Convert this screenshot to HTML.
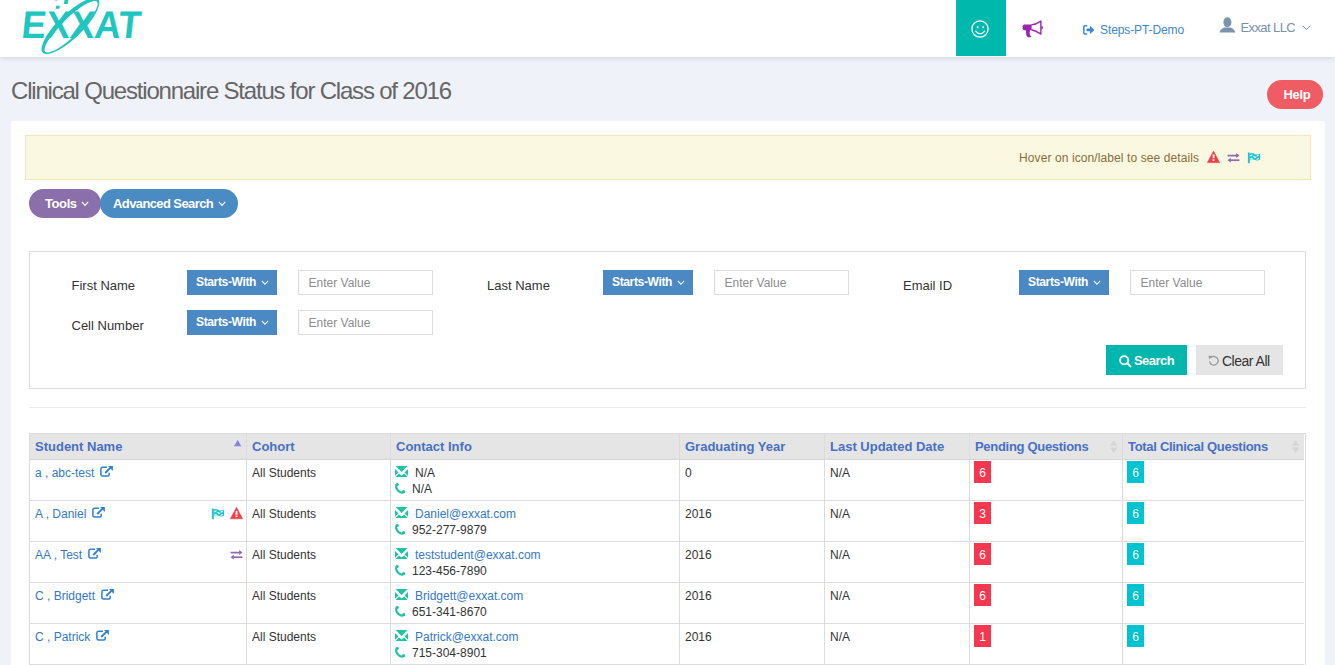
<!DOCTYPE html>
<html><head><meta charset="utf-8">
<style>
*{box-sizing:border-box;margin:0;padding:0}
html,body{width:1335px;height:665px;overflow:hidden}
body{background:#eff2f9;font-family:"Liberation Sans",sans-serif;position:relative;color:#333}
.a{position:absolute}
.t{position:absolute;white-space:nowrap;line-height:1}
svg{position:absolute;overflow:visible}
#hdr{left:0;top:0;width:1335px;height:57px;background:#fff;box-shadow:0 1px 6px rgba(0,0,0,.13)}
.btnp{position:absolute;border-radius:15px;color:#fff;font-weight:bold}
.sw{position:absolute;width:90px;height:25px;background:#4a89c4}
.sw .t{left:9px;top:6px;font-size:12px;font-weight:bold;color:#fff;letter-spacing:-0.35px}
.sw svg{left:74px;top:10px}
.inp{position:absolute;width:135px;height:25px;border:1px solid #dcdcdc;background:#fff}
.inp .t{left:9.5px;top:6px;font-size:12px;color:#8c8c8c}
.lbl{font-size:13px;color:#333}
.th{font-size:13px;font-weight:bold;color:#4870c6}
.td{font-size:12px;color:#333}
.lnk{font-size:12px;color:#3479c4}
.vb{position:absolute;top:433px;width:1px;height:232px;background:#dcdcdc}
.hb{position:absolute;left:29px;width:1277px;height:1px;background:#dcdcdc}
.bdg{position:absolute;width:17px;height:22px;color:#fff;font-size:12px;text-align:center;line-height:22px;padding-top:1px}
.red{background:#f5374f}
.cyan{background:#00c3d2}
.ic{position:absolute}
</style></head><body>

<!-- header -->
<div id="hdr" class="a"></div>
<!-- logo -->
<svg width="150" height="57" viewBox="0 0 150 57" style="left:0;top:0">
  <g fill="#1fc6bf">
    <text x="20" y="38.4" font-family="Liberation Sans" font-weight="bold" font-size="38.5" textLength="119" lengthAdjust="spacingAndGlyphs" transform="skewX(-6) translate(4.5,0)">EXXAT</text>
    <g transform="translate(70.4,26) rotate(-44)">
      <path fill-rule="evenodd" d="M-38.5,0 A38.5,12 0 1 0 38.5,0 A38.5,12 0 1 0 -38.5,0 Z M-36,1 A36,8.8 0 1 0 36,1 A36,8.8 0 1 0 -36,1 Z"/>
    </g>
    <rect x="57" y="5.8" width="3.6" height="3" transform="skewX(-8)"/>
    <rect x="64.5" y="0" width="3.8" height="4" transform="skewX(-8)"/>
    <rect x="55" y="-1" width="2.5" height="1.5"/>
  </g>
</svg>
<div class="a" style="left:956px;top:0;width:50px;height:56px;background:#00b9ad"></div>
<svg width="20" height="20" viewBox="0 0 20 20" style="left:970.3px;top:18.6px">
  <circle cx="10" cy="10" r="8.1" fill="none" stroke="#fff" stroke-width="1.25"/>
  <circle cx="7.6" cy="8.3" r="1" fill="#fff"/>
  <circle cx="13.2" cy="8.3" r="1" fill="#fff"/>
  <path d="M5.4,11.9 Q10.2,17.6 15,11.9" fill="none" stroke="#fff" stroke-width="1.2"/>
</svg>
<svg width="22" height="18" viewBox="0 0 22 18" style="left:1021.5px;top:19.5px">
  <path d="M2.4,4.45 H9.6 V10.2 H2.4 Q0.6,10.2 0.6,8.4 V6.25 Q0.6,4.45 2.4,4.45 Z" fill="#9b27b0"/>
  <path d="M9.3,4.9 Q13.8,4.6 18.9,1.1 V14.1 Q13.8,10.6 9.3,9.8" fill="none" stroke="#9b27b0" stroke-width="1.4" stroke-linejoin="round"/>
  <rect x="19.3" y="6.3" width="1.5" height="2.6" fill="#9b27b0"/>
  <path d="M3.8,10 H8.1 L7.6,13.4 Q7.7,15.5 9.6,16.7 Q8.6,17.4 6.2,17.3 Q4.5,16.8 4.2,14.4 Z" fill="#9b27b0"/>
</svg>
<svg width="12" height="10" viewBox="0 0 12 10" style="left:1082.5px;top:24.5px">
  <path d="M4.2,0.8 H2 Q0.8,0.8 0.8,2 V7.8 Q0.8,9 2,9 H4.2" fill="none" stroke="#3a87d4" stroke-width="1.5"/>
  <path d="M3.6,3.6 H7 V0.8 L11.4,4.9 L7,9 V6.2 H3.6 Z" fill="#3a87d4"/>
</svg>
<div class="t" style="left:1100px;top:24px;font-size:12px;color:#3a87d4;letter-spacing:-0.1px">Steps-PT-Demo</div>
<svg width="17" height="16" viewBox="0 0 17 16" style="left:1218.5px;top:16.6px">
  <ellipse cx="8.4" cy="5.3" rx="4" ry="5" fill="#7b93ad"/>
  <path d="M0.4,15.6 Q1,12.4 5.2,10.6 H11.6 Q15.8,12.4 16.4,15.6 Z" fill="#7b93ad"/>
</svg>
<div class="t" style="left:1240.5px;top:21px;font-size:13px;color:#7990ab;letter-spacing:-0.6px">Exxat LLC</div>
<svg width="9" height="6" viewBox="0 0 9 6" style="left:1302px;top:25px">
  <path d="M0.8,0.8 L4.5,4.6 L8.2,0.8" fill="none" stroke="#7b93ad" stroke-width="1"/>
</svg>


<!-- content panel -->
<div class="t" style="left:11px;top:79px;font-size:24px;color:#666;letter-spacing:-1.2px">Clinical Questionnaire Status for Class of 2016</div>
<div class="btnp" style="left:1267px;top:80px;width:56px;height:29px;background:#ef5c63"><div class="t" style="left:16.5px;top:8px;font-size:13px;letter-spacing:-0.3px">Help</div></div>

<div class="a" style="left:11px;top:121px;width:1314px;height:560px;background:#fff"></div>

<div class="a" style="left:25px;top:135px;width:1286px;height:45px;background:#faf8e1;border:1px solid #f7e5bf"></div>
<div class="t" style="left:1019px;top:152px;font-size:12px;color:#8a6d3b;letter-spacing:0.1px">Hover on icon/label to see details</div>

<div class="btnp" style="left:29px;top:189px;width:72px;height:29px;background:#8b6fab"><div class="t" style="left:16px;top:8px;font-size:13px;letter-spacing:-0.4px">Tools</div></div>
<div class="btnp" style="left:100px;top:189px;width:138px;height:29px;background:#4a8bc3"><div class="t" style="left:13px;top:8px;font-size:13px;letter-spacing:-0.6px">Advanced Search</div></div>

<!-- search panel -->
<div class="a" style="left:29px;top:251px;width:1277px;height:138px;border:1px solid #dedede"></div>
<div class="t lbl" style="left:71.5px;top:279px">First Name</div>
<div class="t lbl" style="left:487px;top:279px">Last Name</div>
<div class="t lbl" style="left:903px;top:279px">Email ID</div>
<div class="t lbl" style="left:71.5px;top:319px">Cell Number</div>

<div class="sw" style="left:187px;top:270px"><div class="t">Starts-With</div><svg width="8" height="6" viewBox="0 0 8 6"><path d="M0.8,0.8 L4,4.2 L7.2,0.8" fill="none" stroke="#fff" stroke-width="1.1"/></svg></div>
<div class="sw" style="left:603px;top:270px"><div class="t">Starts-With</div><svg width="8" height="6" viewBox="0 0 8 6"><path d="M0.8,0.8 L4,4.2 L7.2,0.8" fill="none" stroke="#fff" stroke-width="1.1"/></svg></div>
<div class="sw" style="left:1019px;top:270px"><div class="t">Starts-With</div><svg width="8" height="6" viewBox="0 0 8 6"><path d="M0.8,0.8 L4,4.2 L7.2,0.8" fill="none" stroke="#fff" stroke-width="1.1"/></svg></div>
<div class="sw" style="left:187px;top:310px"><div class="t">Starts-With</div><svg width="8" height="6" viewBox="0 0 8 6"><path d="M0.8,0.8 L4,4.2 L7.2,0.8" fill="none" stroke="#fff" stroke-width="1.1"/></svg></div>

<div class="inp" style="left:298px;top:270px"><div class="t">Enter Value</div></div>
<div class="inp" style="left:714px;top:270px"><div class="t">Enter Value</div></div>
<div class="inp" style="left:1130px;top:270px"><div class="t">Enter Value</div></div>
<div class="inp" style="left:298px;top:310px"><div class="t">Enter Value</div></div>

<div class="a" style="left:1106px;top:345px;width:81px;height:30px;background:#00b6ad"><div class="t" style="left:28px;top:9px;font-size:13px;font-weight:bold;color:#fff;letter-spacing:-0.55px">Search</div></div>
<div class="a" style="left:1196px;top:345px;width:87px;height:30px;background:#e5e5e5"><div class="t" style="left:26px;top:9px;font-size:14px;color:#333;letter-spacing:-0.5px">Clear All</div></div>

<div class="a" style="left:29px;top:407px;width:1277px;height:1px;background:#ececec"></div>

<!-- table -->
<div class="a" style="left:30px;top:434px;width:1274px;height:25px;background:#e5e5e5"></div>
<div class="hb" style="top:433px"></div>
<div class="hb" style="width:1275px;top:459px;background:#d5d5d5"></div>
<div class="hb" style="width:1275px;top:500px"></div>
<div class="hb" style="width:1275px;top:541px"></div>
<div class="hb" style="width:1275px;top:582px"></div>
<div class="hb" style="width:1275px;top:623px"></div>
<div class="hb" style="width:1275px;top:664px"></div>
<div class="vb" style="left:29px"></div>
<div class="vb" style="left:246px"></div>
<div class="vb" style="left:390px"></div>
<div class="vb" style="left:679px"></div>
<div class="vb" style="left:824px"></div>
<div class="vb" style="left:969px"></div>
<div class="vb" style="left:1122px"></div>
<div class="vb" style="left:1305px"></div>

<div class="t th" style="left:35px;top:440px">Student Name</div>
<div class="t th" style="left:252px;top:440px">Cohort</div>
<div class="t th" style="left:396px;top:440px">Contact Info</div>
<div class="t th" style="left:685px;top:440px">Graduating Year</div>
<div class="t th" style="left:830px;top:440px">Last Updated Date</div>
<div class="t th" style="left:975px;top:440px;letter-spacing:-0.3px">Pending Questions</div>
<div class="t th" style="left:1128px;top:440px;letter-spacing:-0.3px">Total Clinical Questions</div>

<!-- alert icons -->
<svg width="13" height="13" viewBox="0 0 13 13" style="left:1207px;top:150px"><path d="M6.5,1.1 L12.6,12.6 H0.4 Z" fill="#ef3f47" stroke="#ef3f47" stroke-width="0.6" stroke-linejoin="round"/><rect x="5.6" y="4.4" width="1.9" height="3.8" fill="#fff"/><rect x="5.6" y="9.2" width="1.9" height="1.6" fill="#fff"/></svg>
<svg width="13" height="10" viewBox="0 0 13 10" style="left:1227px;top:152.5px"><path d="M0.6,2.6 H10.5" stroke="#8c6ab2" stroke-width="1.7"/><path d="M9.2,0 L12.5,2.6 L9.2,5 Z" fill="#8c6ab2"/><path d="M2.5,7.2 H12.4" stroke="#8c6ab2" stroke-width="1.7"/><path d="M3.8,4.8 L0.5,7.2 L3.8,9.6 Z" fill="#8c6ab2"/></svg>
<svg width="14" height="12" viewBox="0 0 14 12" style="left:1247px;top:151.5px"><rect x="0.9" y="0.5" width="1.9" height="10.7" fill="#1fc2d3"/><path d="M2.8,1.4 Q5,0.6 7.6,2 Q10.4,3.2 13.1,1.6 V7.6 Q10.4,9.2 7.6,7.8 Q5,6.6 2.8,8.4 Z" fill="#1fc2d3"/><g fill="#fff" opacity="0.9"><ellipse cx="4.3" cy="3.3" rx="1.5" ry="0.7" transform="rotate(-25 4.3 3.3)"/><ellipse cx="10.7" cy="3.7" rx="1.5" ry="0.7" transform="rotate(-25 10.7 3.7)"/><ellipse cx="7.6" cy="5" rx="1.5" ry="0.7" transform="rotate(20 7.6 5)"/><ellipse cx="4.3" cy="6.6" rx="1.5" ry="0.7" transform="rotate(-25 4.3 6.6)"/><ellipse cx="10.7" cy="6.9" rx="1.5" ry="0.7" transform="rotate(-25 10.7 6.9)"/></g></svg>
<!-- button chevrons -->
<svg width="8" height="6" viewBox="0 0 8 6" style="left:80.5px;top:201px"><path d="M0.8,0.8 L4,4.4 L7.2,0.8" fill="none" stroke="#fff" stroke-width="1.1"/></svg>
<svg width="8" height="6" viewBox="0 0 8 6" style="left:217.5px;top:201px"><path d="M0.8,0.8 L4,4.4 L7.2,0.8" fill="none" stroke="#fff" stroke-width="1.1"/></svg>
<!-- search icon -->
<svg width="13" height="13" viewBox="0 0 13 13" style="left:1118.5px;top:354.5px"><circle cx="5.2" cy="5.2" r="4.1" fill="none" stroke="#fff" stroke-width="1.8"/><path d="M8.2,8.2 L11.4,11.4" stroke="#fff" stroke-width="2" stroke-linecap="round"/></svg>
<!-- refresh icon -->
<svg width="12" height="12" viewBox="0 0 12 12" style="left:1207.5px;top:355px"><path d="M3.2,2.4 A4.3,4.3 0 1 1 1.6,6.4" fill="none" stroke="#999" stroke-width="1.3"/><path d="M0.6,0.8 L4.6,1 L1.2,4.4 Z" fill="#999"/></svg>
<!-- sort arrows -->
<svg width="8" height="7" viewBox="0 0 8 7" style="left:234px;top:440px"><path d="M3.7,0 L7.4,6.2 H0 Z" fill="#8a80dd"/></svg>
<svg width="8" height="14" viewBox="0 0 8 14" style="left:1109.5px;top:439.5px"><path d="M3.7,0 L7.4,5.8 H0 Z M0,7.4 H7.4 L3.7,13.2 Z" fill="#d6d6d6"/></svg>
<svg width="8" height="14" viewBox="0 0 8 14" style="left:1291.8px;top:439.5px"><path d="M3.7,0 L7.4,5.8 H0 Z M0,7.4 H7.4 L3.7,13.2 Z" fill="#d6d6d6"/></svg>

<!-- rows -->
<div class="t lnk" style="left:35px;top:467px">a , abc-test<svg width="13" height="11" viewBox="0 0 13 11" style="position:relative;display:inline-block;vertical-align:top;margin-left:6px;top:-1px"><path d="M7,1.2 H2.6 Q0.9,1.2 0.9,2.9 V8.6 Q0.9,10.1 2.6,10.1 H7.9 Q9.2,10.1 9.2,8.6 V6.8" fill="none" stroke="#2f80cf" stroke-width="1.5"/><path d="M5.2,7 L10.4,1.8" stroke="#2f80cf" stroke-width="1.9"/><path d="M8,0 H12.9 V4.9 Z" fill="#2f80cf"/></svg></div>
<div class="t td" style="left:252px;top:467px">All Students</div>
<svg class="ic" width="13" height="11" viewBox="0 0 13 11" style="left:395px;top:466px"><path d="M0.6,0 H12.5 L6.6,5.9 Z M0,2.9 L3.6,6.5 L0,9.8 Z M13,2.9 L9.5,6.5 L13,9.8 Z M0.6,11 L3.9,7.5 L6.6,9.4 L9.2,7.5 L12.5,11 Z" fill="#1fc39f"/></svg>
<div class="t td" style="left:415px;top:467px">N/A</div>
<svg class="ic" width="11" height="11" viewBox="0 0 11 11" style="left:395px;top:483px"><path d="M2.3,1.2 C0.2,2.4 1,6 3.6,8.2 C5.6,9.8 7.6,10 8.8,8.9" fill="none" stroke="#1fc39f" stroke-width="2.2" stroke-linecap="round"/><circle cx="2.2" cy="1.6" r="1.5" fill="#1fc39f"/><circle cx="8.6" cy="8.6" r="1.5" fill="#1fc39f"/></svg>
<div class="t td" style="left:412px;top:483px">N/A</div>
<div class="t td" style="left:685px;top:467px">0</div>
<div class="t td" style="left:830px;top:467px">N/A</div>
<div class="bdg red" style="left:974px;top:461px">6</div>
<div class="bdg cyan" style="left:1127px;top:461px">6</div>
<div class="t lnk" style="left:35px;top:508px">A , Daniel<svg width="13" height="11" viewBox="0 0 13 11" style="position:relative;display:inline-block;vertical-align:top;margin-left:6px;top:-1px"><path d="M7,1.2 H2.6 Q0.9,1.2 0.9,2.9 V8.6 Q0.9,10.1 2.6,10.1 H7.9 Q9.2,10.1 9.2,8.6 V6.8" fill="none" stroke="#2f80cf" stroke-width="1.5"/><path d="M5.2,7 L10.4,1.8" stroke="#2f80cf" stroke-width="1.9"/><path d="M8,0 H12.9 V4.9 Z" fill="#2f80cf"/></svg></div>
<svg class="ic" width="14" height="12" viewBox="0 0 14 12" style="left:211px;top:508px"><rect x="0.9" y="0.5" width="1.9" height="10.7" fill="#1fc2d3"/><path d="M2.8,1.4 Q5,0.6 7.6,2 Q10.4,3.2 13.1,1.6 V7.6 Q10.4,9.2 7.6,7.8 Q5,6.6 2.8,8.4 Z" fill="#1fc2d3"/><g fill="#fff" opacity="0.9"><ellipse cx="4.3" cy="3.3" rx="1.5" ry="0.7" transform="rotate(-25 4.3 3.3)"/><ellipse cx="10.7" cy="3.7" rx="1.5" ry="0.7" transform="rotate(-25 10.7 3.7)"/><ellipse cx="7.6" cy="5" rx="1.5" ry="0.7" transform="rotate(20 7.6 5)"/><ellipse cx="4.3" cy="6.6" rx="1.5" ry="0.7" transform="rotate(-25 4.3 6.6)"/><ellipse cx="10.7" cy="6.9" rx="1.5" ry="0.7" transform="rotate(-25 10.7 6.9)"/></g></svg>
<svg class="ic" width="13" height="12" viewBox="0 0 13 12" style="left:230px;top:507px"><path d="M6.5,0.3 L12.6,11.8 H0.3 Z" fill="#ef3f47" stroke="#ef3f47" stroke-width="0.6" stroke-linejoin="round"/><rect x="5.6" y="4.1" width="1.9" height="3.6" fill="#fff"/><rect x="5.6" y="8.6" width="1.9" height="1.5" fill="#fff"/></svg>
<div class="t td" style="left:252px;top:508px">All Students</div>
<svg class="ic" width="13" height="11" viewBox="0 0 13 11" style="left:395px;top:507px"><path d="M0.6,0 H12.5 L6.6,5.9 Z M0,2.9 L3.6,6.5 L0,9.8 Z M13,2.9 L9.5,6.5 L13,9.8 Z M0.6,11 L3.9,7.5 L6.6,9.4 L9.2,7.5 L12.5,11 Z" fill="#1fc39f"/></svg>
<div class="t lnk" style="left:415px;top:508px">Daniel@exxat.com</div>
<svg class="ic" width="11" height="11" viewBox="0 0 11 11" style="left:395px;top:524px"><path d="M2.3,1.2 C0.2,2.4 1,6 3.6,8.2 C5.6,9.8 7.6,10 8.8,8.9" fill="none" stroke="#1fc39f" stroke-width="2.2" stroke-linecap="round"/><circle cx="2.2" cy="1.6" r="1.5" fill="#1fc39f"/><circle cx="8.6" cy="8.6" r="1.5" fill="#1fc39f"/></svg>
<div class="t td" style="left:412px;top:524px">952-277-9879</div>
<div class="t td" style="left:685px;top:508px">2016</div>
<div class="t td" style="left:830px;top:508px">N/A</div>
<div class="bdg red" style="left:974px;top:502px">3</div>
<div class="bdg cyan" style="left:1127px;top:502px">6</div>
<div class="t lnk" style="left:35px;top:549px">AA , Test<svg width="13" height="11" viewBox="0 0 13 11" style="position:relative;display:inline-block;vertical-align:top;margin-left:6px;top:-1px"><path d="M7,1.2 H2.6 Q0.9,1.2 0.9,2.9 V8.6 Q0.9,10.1 2.6,10.1 H7.9 Q9.2,10.1 9.2,8.6 V6.8" fill="none" stroke="#2f80cf" stroke-width="1.5"/><path d="M5.2,7 L10.4,1.8" stroke="#2f80cf" stroke-width="1.9"/><path d="M8,0 H12.9 V4.9 Z" fill="#2f80cf"/></svg></div>
<svg class="ic" width="13" height="10" viewBox="0 0 13 10" style="left:230px;top:550px"><path d="M0.6,2.6 H10.5" stroke="#8c6ab2" stroke-width="1.7"/><path d="M9.2,0 L12.5,2.6 L9.2,5 Z" fill="#8c6ab2"/><path d="M2.5,7.2 H12.4" stroke="#8c6ab2" stroke-width="1.7"/><path d="M3.8,4.8 L0.5,7.2 L3.8,9.6 Z" fill="#8c6ab2"/></svg>
<div class="t td" style="left:252px;top:549px">All Students</div>
<svg class="ic" width="13" height="11" viewBox="0 0 13 11" style="left:395px;top:548px"><path d="M0.6,0 H12.5 L6.6,5.9 Z M0,2.9 L3.6,6.5 L0,9.8 Z M13,2.9 L9.5,6.5 L13,9.8 Z M0.6,11 L3.9,7.5 L6.6,9.4 L9.2,7.5 L12.5,11 Z" fill="#1fc39f"/></svg>
<div class="t lnk" style="left:415px;top:549px">teststudent@exxat.com</div>
<svg class="ic" width="11" height="11" viewBox="0 0 11 11" style="left:395px;top:565px"><path d="M2.3,1.2 C0.2,2.4 1,6 3.6,8.2 C5.6,9.8 7.6,10 8.8,8.9" fill="none" stroke="#1fc39f" stroke-width="2.2" stroke-linecap="round"/><circle cx="2.2" cy="1.6" r="1.5" fill="#1fc39f"/><circle cx="8.6" cy="8.6" r="1.5" fill="#1fc39f"/></svg>
<div class="t td" style="left:412px;top:565px">123-456-7890</div>
<div class="t td" style="left:685px;top:549px">2016</div>
<div class="t td" style="left:830px;top:549px">N/A</div>
<div class="bdg red" style="left:974px;top:543px">6</div>
<div class="bdg cyan" style="left:1127px;top:543px">6</div>
<div class="t lnk" style="left:35px;top:590px">C , Bridgett<svg width="13" height="11" viewBox="0 0 13 11" style="position:relative;display:inline-block;vertical-align:top;margin-left:6px;top:-1px"><path d="M7,1.2 H2.6 Q0.9,1.2 0.9,2.9 V8.6 Q0.9,10.1 2.6,10.1 H7.9 Q9.2,10.1 9.2,8.6 V6.8" fill="none" stroke="#2f80cf" stroke-width="1.5"/><path d="M5.2,7 L10.4,1.8" stroke="#2f80cf" stroke-width="1.9"/><path d="M8,0 H12.9 V4.9 Z" fill="#2f80cf"/></svg></div>
<div class="t td" style="left:252px;top:590px">All Students</div>
<svg class="ic" width="13" height="11" viewBox="0 0 13 11" style="left:395px;top:589px"><path d="M0.6,0 H12.5 L6.6,5.9 Z M0,2.9 L3.6,6.5 L0,9.8 Z M13,2.9 L9.5,6.5 L13,9.8 Z M0.6,11 L3.9,7.5 L6.6,9.4 L9.2,7.5 L12.5,11 Z" fill="#1fc39f"/></svg>
<div class="t lnk" style="left:415px;top:590px">Bridgett@exxat.com</div>
<svg class="ic" width="11" height="11" viewBox="0 0 11 11" style="left:395px;top:606px"><path d="M2.3,1.2 C0.2,2.4 1,6 3.6,8.2 C5.6,9.8 7.6,10 8.8,8.9" fill="none" stroke="#1fc39f" stroke-width="2.2" stroke-linecap="round"/><circle cx="2.2" cy="1.6" r="1.5" fill="#1fc39f"/><circle cx="8.6" cy="8.6" r="1.5" fill="#1fc39f"/></svg>
<div class="t td" style="left:412px;top:606px">651-341-8670</div>
<div class="t td" style="left:685px;top:590px">2016</div>
<div class="t td" style="left:830px;top:590px">N/A</div>
<div class="bdg red" style="left:974px;top:584px">6</div>
<div class="bdg cyan" style="left:1127px;top:584px">6</div>
<div class="t lnk" style="left:35px;top:631px">C , Patrick<svg width="13" height="11" viewBox="0 0 13 11" style="position:relative;display:inline-block;vertical-align:top;margin-left:6px;top:-1px"><path d="M7,1.2 H2.6 Q0.9,1.2 0.9,2.9 V8.6 Q0.9,10.1 2.6,10.1 H7.9 Q9.2,10.1 9.2,8.6 V6.8" fill="none" stroke="#2f80cf" stroke-width="1.5"/><path d="M5.2,7 L10.4,1.8" stroke="#2f80cf" stroke-width="1.9"/><path d="M8,0 H12.9 V4.9 Z" fill="#2f80cf"/></svg></div>
<div class="t td" style="left:252px;top:631px">All Students</div>
<svg class="ic" width="13" height="11" viewBox="0 0 13 11" style="left:395px;top:630px"><path d="M0.6,0 H12.5 L6.6,5.9 Z M0,2.9 L3.6,6.5 L0,9.8 Z M13,2.9 L9.5,6.5 L13,9.8 Z M0.6,11 L3.9,7.5 L6.6,9.4 L9.2,7.5 L12.5,11 Z" fill="#1fc39f"/></svg>
<div class="t lnk" style="left:415px;top:631px">Patrick@exxat.com</div>
<svg class="ic" width="11" height="11" viewBox="0 0 11 11" style="left:395px;top:647px"><path d="M2.3,1.2 C0.2,2.4 1,6 3.6,8.2 C5.6,9.8 7.6,10 8.8,8.9" fill="none" stroke="#1fc39f" stroke-width="2.2" stroke-linecap="round"/><circle cx="2.2" cy="1.6" r="1.5" fill="#1fc39f"/><circle cx="8.6" cy="8.6" r="1.5" fill="#1fc39f"/></svg>
<div class="t td" style="left:412px;top:647px">715-304-8901</div>
<div class="t td" style="left:685px;top:631px">2016</div>
<div class="t td" style="left:830px;top:631px">N/A</div>
<div class="bdg red" style="left:974px;top:625px">1</div>
<div class="bdg cyan" style="left:1127px;top:625px">6</div>
</body></html>
